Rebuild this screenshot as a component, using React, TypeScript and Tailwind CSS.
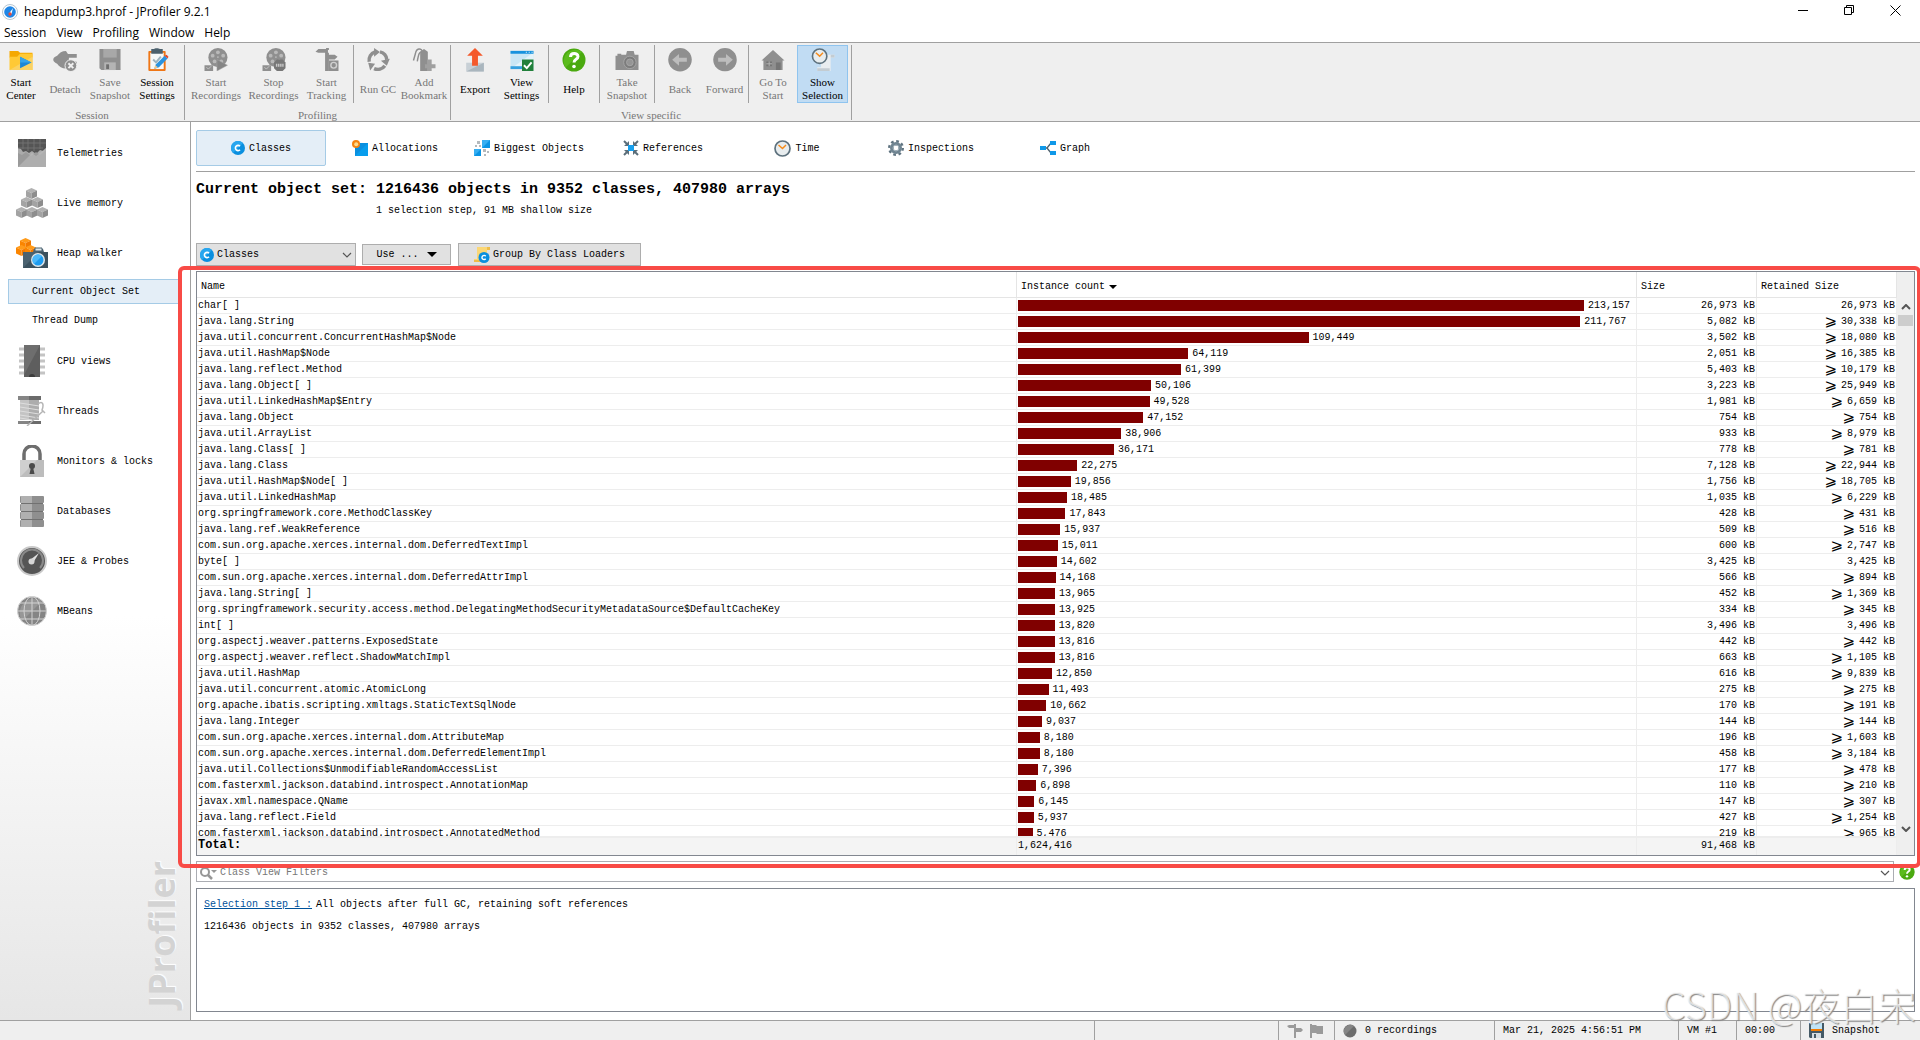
import { ReactNode } from "react"
import clsx from "clsx"

const G = "#8f8f8f"

const FolderIcon = () => (
  <svg width="24" height="24" viewBox="0 0 24 24">
    <path d="M0 3h9l2 2h13v5H0z" fill="#f5a800" />
    <path d="M0 9h8l3-3h13v17H0z" fill="#ffc935" />
    <path d="M0 23L24 9v14z" fill="#fbd262" />
    <path d="M11 9l12 6-12 6z" fill="#1c87d6" />
    <path d="M11 9l12 6H11z" fill="#35a4ea" />
  </svg>
)

const DetachIcon = () => (
  <svg width="24" height="24" viewBox="0 0 24 24" fill={G}>
    <path d="M0 12c0-2 2-3 4-4 2-3 5-5 9-5l2 3h9v4h-8v4h8v3h-9l-2 4c-4 0-7-2-9-5-2-1-4-2-4-4z" />
    <circle cx="18" cy="18" r="6" stroke="#efefef" />
    <path d="M15.500 15.500l5 5M20.500 15.500l-5 5" stroke="#efefef" strokeWidth="2" />
  </svg>
)

const SaveIcon = () => (
  <svg width="24" height="24" viewBox="0 0 24 24">
    <path d="M1 1h22v22H3l-2-2z" fill={G} />
    <path d="M5 1h14v9H5z" fill="#a8a8a8" />
    <path d="M6 15h12v8H6z" fill="#b4b4b4" />
    <path d="M8 17h3v5H8z" fill="#6f6f6f" />
  </svg>
)

const SessionSettingsIcon = () => (
  <svg width="24" height="24" viewBox="0 0 24 24">
    <rect x="3" y="3" width="18" height="21" rx="1" fill="#ef7616" />
    <rect x="5" y="5" width="14" height="17" fill="#f6f9fa" />
    <path d="M6 1h3c0-1 5-1 6 0h3v5H6z" fill="#4c616e" />
    <path d="M8 12l3 3 5-6" fill="none" stroke="#9db3bf" strokeWidth="2" />
    <path d="M9 22l2-5 9-9 3 3-9 9z" fill="#2b93df" />
    <path d="M20 8l2-1 2 2-1 2z" fill="#e4472b" />
    <path d="M9 22l1-4 3 2z" fill="#f2c98f" />
  </svg>
)

const Reel = () => (
  <>
    <circle cx="14" cy="10" r="10" fill={G} />
    <g fill="#b9b9b9">
      <circle cx="14" cy="4.500" r="2" />
      <circle cx="8.500" cy="8" r="2" />
      <circle cx="19.500" cy="8" r="2" />
      <circle cx="10.500" cy="14" r="2" />
      <circle cx="17.500" cy="14" r="2" />
      <circle cx="14" cy="9.500" r="1" />
    </g>
    <path d="M0 18h9v6H0z" fill={G} />
    <path d="M2 20l2 2 3-3" stroke="#c4c4c4" fill="none" />
  </>
)

const StartRecIcon = () => (
  <svg width="24" height="24" viewBox="0 0 24 24">
    <Reel />
    <path d="M13 12l11 6-11 6z" fill="#858585" stroke="#a9a9a9" strokeWidth=".5" />
  </svg>
)

const StopRecIcon = () => (
  <svg width="24" height="24" viewBox="0 0 24 24">
    <Reel />
    <path d="M15 12h6l3 3v6l-3 3h-6l-3-3v-6z" fill="#777" />
    <path d="M14 18h8" stroke="#c9c9c9" strokeWidth="3" strokeDasharray="1.500 .7" />
  </svg>
)

const TrackIcon = () => (
  <svg width="24" height="24" viewBox="0 0 24 24" fill={G}>
    <path d="M0 4l3-3h8V0h3v2h-1v3H3zM11 7h9l3 2-3 3h-9zM10 5h4v19h-4z" />
    <path d="M14 13h10v11H14z" />
    <circle cx="19" cy="18" r="3" fill="none" stroke="#d0d0d0" strokeWidth="1.500" />
  </svg>
)

const GcIcon = () => (
  <svg width="24" height="24" viewBox="0 0 24 24" fill={G}>
    <g fill="none" stroke={G} strokeWidth="3.500">
      <path d="M3 14a9 9 0 0 1 6-10" />
      <path d="M14 4a9 9 0 0 1 7 8" />
      <path d="M19 18a9 9 0 0 1-11 3" />
    </g>
    <path d="M8 0l6 4-6 5zM24 11l-3 7-6-5zM2 15l7 1-5 7z" />
  </svg>
)

const BookmarkIcon = () => (
  <svg width="24" height="24" viewBox="0 0 24 24" fill={G}>
    <path d="M8 4l4-3 4 3v20H8z" />
    <path d="M11 5C9-1 4 0 3 6l-2 7M11 5C7 2 6 8 5 14" fill="none" stroke={G} strokeWidth="1.500" />
    <path d="M16 12h4v5h4v4h-4v3h-4v-3h-3v-4h3z" fill="#a0a0a0" />
  </svg>
)

const ExportIcon = () => (
  <svg width="24" height="24" viewBox="0 0 24 24">
    <path d="M3 15h18v9H3z" fill="#c8d0d6" />
    <path d="M3 24l18-9v9z" fill="#aab6be" />
    <path d="M12 0l8 8h-5v10H9V8H4z" fill="#f4592b" />
  </svg>
)

const ViewSettingsIcon = () => (
  <svg width="24" height="24" viewBox="0 0 24 24">
    <path d="M0 3h24v19H0z" fill="#c9e6f5" />
    <path d="M0 22L22 6h2v16z" fill="#e3f3fa" />
    <path d="M0 19h12v3H0z" fill="#35a0df" />
    <path d="M0 3h24v3H0z" fill="#1792de" />
    <path d="M16 4h1v1h-1zM19 4h1v1h-1zM22 4h1v1h-1z" fill="#fff" />
    <path d="M12 12h12v12H12z" fill="#21803b" />
    <path d="M14 18l3 3 5-6" fill="none" stroke="#fff" strokeWidth="2" />
  </svg>
)

const HelpIcon = ({ size = 24 }: { size?: number }) => (
  <svg width={size} height={size} viewBox="0 0 24 24" className="shrink-0">
    <circle cx="12" cy="12" r="11.500" fill="#4aa90f" />
    <path d="M3.500 19.500A11.500 11.500 0 0 1 20 4z" fill="#5bbb1c" />
    <path d="M8.500 9c0-5 7.500-4.500 7.500-.5 0 3-4 2.500-4 6" fill="none" stroke="#fff" strokeWidth="3" />
    <circle cx="12" cy="18.500" r="1.800" fill="#fff" />
  </svg>
)

const CameraIcon = () => (
  <svg width="24" height="24" viewBox="0 0 24 24">
    <path d="M0 8h2V6h4v1h5l1-4h7l1 4h4v16H0z" fill={G} />
    <circle cx="15" cy="15" r="6.500" fill="#7c7c7c" stroke="#a5a5a5" />
    <circle cx="15" cy="15" r="3.500" fill="#959595" stroke="#a5a5a5" />
  </svg>
)

const ArrowIcon = ({ flip = false }: { flip?: boolean }) => (
  <svg width="24" height="24" viewBox="0 0 24 24" className={clsx(flip && "rotate-180")}>
    <circle cx="12" cy="12" r="12" fill={G} />
    <path d="M4 12l7-6v4h8v4h-8v4z" fill="#bdbdbd" />
  </svg>
)

const HomeIcon = () => (
  <svg width="24" height="24" viewBox="0 0 24 24">
    <path d="M12 2L24 13h-2v10H2V13H0z" fill={G} />
    <path d="M5 14h6v5H5zM15 15h5v8h-5z" fill="#757575" />
    <path d="M8 14v5M5 16.500h6" stroke="#b5b5b5" />
  </svg>
)

const ClockFace = () => (
  <>
    <circle cx="8.500" cy="8.500" r="7.500" fill="#e8edef" stroke="#5d717d" strokeWidth="1.700" />
    <path d="M4.500 5l4 3.500L12 5" fill="none" stroke="#f58b1b" strokeWidth="1.500" />
  </>
)

const ShowSelectionIcon = () => (
  <svg width="24" height="24" viewBox="0 0 24 24">
    <path d="M10 7h14v3h-4v14H6v-4h4z" fill="#e9edf0" />
    <path d="M20 7h4v3h-4zM6 21h13v3H6z" fill="#c3ccd2" />
    <ClockFace />
  </svg>
)

const ClassIcon = () => (
  <svg width="14" height="14" viewBox="0 0 14 14" className="shrink-0">
    <circle cx="7" cy="7" r="7" fill="#0a8fdf" />
    <path d="M2 12A7 7 0 0 1 12 2z" fill="#27a6ef" />
    <path d="M9 5.300a2.600 2.600 0 1 0 0 3.400" fill="none" stroke="#fff" strokeWidth="1.600" />
  </svg>
)

const AllocIcon = () => (
  <svg width="16" height="16" viewBox="0 0 16 16">
    <path d="M3 3h13v13H3z" fill="#0a8fdf" />
    <path d="M3 16L16 3v13z" fill="#079ded" />
    <circle cx="4" cy="4" r="4" fill="#f58512" />
    <circle cx="4.200" cy="4.200" r="2" fill="#ffdc8c" />
  </svg>
)

const BiggestIcon = () => (
  <svg width="16" height="16" viewBox="0 0 16 16">
    <path d="M8 0h8v8H8zM0 9h7v7H0z" fill="#0a94e4" />
    <path d="M8 8l8-8H8zM0 16l7-7H0z" fill="#36aef2" />
    <path d="M3 1h3v3H3zM1 5h2v2H1zM5 5h2v2H5zM9 9h3v3H9zM13 11h2v2h-2zM10 14h2v2h-2z" fill="#b4b9bd" />
  </svg>
)

const RefsIcon = () => (
  <svg width="16" height="16" viewBox="0 0 16 16">
    <path d="M1 1l4 4M15 1l-4 4M1 15l4-4M15 15l-4-4" stroke="#5b6e7a" strokeWidth="2" />
    <path d="M6 1v5H1zM10 1v5h5zM6 15v-5H1zM10 15v-5h5z" fill="#5b6e7a" />
    <path d="M5 5h6v6H5z" fill="#18a0ee" />
  </svg>
)

const TimeIcon = () => (
  <svg width="17" height="17" viewBox="0 0 17 17">
    <ClockFace />
  </svg>
)

const GearIcon = () => (
  <svg width="16" height="16" viewBox="0 0 16 16">
    <circle cx="8" cy="8" r="6.800" fill="none" stroke="#5f7380" strokeWidth="2.400" strokeDasharray="2.700 2.640" />
    <circle cx="8" cy="8" r="4.200" fill="none" stroke="#6f8491" strokeWidth="3.600" />
    <circle cx="8" cy="8" r="3" fill="none" stroke="#a5b4bd" />
  </svg>
)

const GraphIcon = () => (
  <svg width="16" height="16" viewBox="0 0 16 16">
    <path d="M5 8h2l4-5M7 8l4 5" fill="none" stroke="#4f626e" strokeWidth="1.300" />
    <path d="M0 6h6v4H0zM10 1h6v4h-6zM10 11h6v4h-6z" fill="#0f98e8" />
  </svg>
)

const LoaderIcon = () => (
  <svg width="16" height="16" viewBox="0 0 16 16">
    <path d="M3 0h13v3h-3v12H0v-3h3z" fill="#fbd776" />
    <path d="M13 0h3v3h-3zM0 13h10v2H0z" fill="#eebd4a" />
    <circle cx="10" cy="10.500" r="5.500" fill="#0a8fdf" />
    <path d="M11.700 9.200a2.100 2.100 0 1 0 0 2.600" fill="none" stroke="#fff" strokeWidth="1.400" />
  </svg>
)

const TelemetryIcon = () => (
  <svg width="28" height="28" viewBox="0 0 28 28">
    <rect width="28" height="28" rx="1" fill="#ababab" />
    <path d="M0 0h28v9l-3 3-3-1-4 4-4-3-3 2-3-2-3 1-2-3-3-1z" fill="#555" />
    <path d="M0 4h28M0 9h25M5 0v10M10 0v12M16 0v12M22 0v10" stroke="#777" strokeWidth=".8" />
    <path d="M0 14l4 2 4-3 5 4 5-4 4 3 6-5v17H0z" fill="#9a9a9a" />
    <path d="M0 28L14 14l4 3 10-8v19z" fill="#bcbcbc" opacity=".6" />
  </svg>
)

type CubeProps = { x: number; y: number; a?: string; b?: string; c?: string }

const Cube = ({ x, y, a = "#b2b2b2", b = "#a3a3a3", c = "#8d8d8d" }: CubeProps) => (
  <g transform={`translate(${x} ${y})`}>
    <path d="M0 2.500L5.500 0 11 2.500 5.500 5z" fill={a} />
    <path d="M0 2.500L5.500 5v6L0 8.500z" fill={b} />
    <path d="M11 2.500L5.500 5v6L11 8.500z" fill={c} />
  </g>
)

const CubesIcon = () => (
  <svg width="32" height="30" viewBox="0 0 32 30">
    <Cube x={10} y={0} />
    <Cube x={5} y={9} />
    <Cube x={16} y={9} />
    <Cube x={0} y={19} />
    <Cube x={10.500} y={19} />
    <Cube x={21} y={19} />
  </svg>
)

const HeapIcon = () => (
  <svg width="32" height="30" viewBox="0 0 32 30">
    <Cube x={4} y={0} a="#ff9b1a" b="#fb8500" c="#f07800" />
    <Cube x={0} y={7} a="#ff9b1a" b="#fb8500" c="#f07800" />
    <Cube x={9} y={7} a="#ff9b1a" b="#fb8500" c="#f07800" />
    <path d="M7 14h10l1-3h9l1 3h4v16H7z" fill="#4b6270" />
    <path d="M7 30l16-16h9v16z" fill="#3b515e" />
    <path d="M19 10h7v3h-7z" fill="#dfe6ea" stroke="#4b6270" />
    <circle cx="22" cy="22" r="7" fill="#e1e8eb" />
    <circle cx="22" cy="22" r="5.500" fill="#1d9cf0" />
    <path d="M18 26a5.500 5.500 0 0 1 8-8z" fill="#4bb8fa" />
  </svg>
)

const CpuIcon = () => (
  <svg width="26" height="32" viewBox="0 0 26 32">
    <path d="M0 4h26M0 10h26M0 16h26M0 22h26M0 28h26" stroke="#c4c4c4" strokeWidth="3" />
    <path d="M5 0h16v32H5z" fill="#5e5e5e" />
    <path d="M5 0h16L5 30z" fill="#6e6e6e" />
    <path d="M10 32a3 3 0 0 1 6 0z" fill="#3d3d3d" />
  </svg>
)

const SpoolIcon = () => (
  <svg width="28" height="30" viewBox="0 0 28 30">
    <path d="M2 4h19v20H2z" fill="#c4c4c4" />
    <path d="M11 4h10v20H11z" fill="#adadad" />
    <path d="M2 7l19 3M2 11l19 3M2 15l19 3M2 19l19 3M2 22l12 2" stroke="#dedede" strokeWidth="1" />
    <path d="M0 0h23v4H0zM0 25h23v3H0z" fill="#6b6b6b" />
    <path d="M0 0h11v4H0zM0 25h11v3H0z" fill="#858585" />
    <path d="M20 8c5-4 6 1 4 6l3 3M9 30l16-15" fill="none" stroke="#b5b5b5" strokeWidth="1.500" />
  </svg>
)

const LockIcon = () => (
  <svg width="24" height="32" viewBox="0 0 24 32">
    <path d="M4 16V9a8 8 0 0 1 16 0v7" fill="none" stroke="#6e6e6e" strokeWidth="3.500" />
    <path d="M0 15h24v17H0z" fill="#cfcfcf" />
    <path d="M0 32l17-17h7v17z" fill="#bdbdbd" />
    <circle cx="12" cy="21" r="3" fill="#4a4a4a" />
    <path d="M11 22h2l1.500 7h-5z" fill="#4a4a4a" />
  </svg>
)

const DbIcon = () => (
  <svg width="24" height="31" viewBox="0 0 24 31">
    {[0, 8, 16, 24].map((y) => (
      <g key={y}>
        <rect y={y} width="24" height="7" rx="1" fill="#8f8f8f" />
        <path d={`M1 ${y}h11v7H1z`} fill="#b0b0b0" />
        <path d={`M1 ${y + 7}h22v1H1z`} fill="#717171" />
      </g>
    ))}
  </svg>
)

const GaugeIcon = () => (
  <svg width="30" height="30" viewBox="0 0 30 30">
    <circle cx="15" cy="15" r="14" fill="#555" stroke="#c9c9c9" strokeWidth="2" />
    <path d="M7 22a11 11 0 1 1 16 0" fill="none" stroke="#8a8a8a" strokeWidth="2" />
    <path d="M13 14l9-7-6 10z" fill="#e0e0e0" />
    <circle cx="14.500" cy="15.500" r="3" fill="#d6d6d6" />
  </svg>
)

const GlobeIcon = () => (
  <svg width="30" height="30" viewBox="0 0 30 30">
    <circle cx="15" cy="15" r="14.500" fill="#858585" />
    <path d="M5 25A14.500 14.500 0 0 1 25 5z" fill="#979797" />
    <g fill="none" stroke="#d2d2d2">
      <circle cx="15" cy="15" r="14.500" />
      <ellipse cx="15" cy="15" rx="8" ry="14.500" />
      <path d="M15 0v30M0 15h30M3 7h24M3 23h24" />
    </g>
  </svg>
)

const Chevron = ({ up = false, bold = false }: { up?: boolean; bold?: boolean }) => (
  <svg width="10" height="6" viewBox="0 0 10 6" className={clsx(up && "rotate-180")}>
    <path d="M1 1l4 4 4-4" fill="none" stroke="#555" strokeWidth={bold ? 2 : 1.200} />
  </svg>
)

const Caret = ({ width = 8, height = 4 }: { width?: number; height?: number }) => (
  <svg width={width} height={height} viewBox="0 0 8 4" preserveAspectRatio="none">
    <path d="M0 0h8L4 4z" fill="#000" />
  </svg>
)

type ToolProps = { icon: ReactNode; lines: string[]; width: string; enabled?: boolean; selected?: boolean }

function Tool({ icon, lines, width, enabled, selected }: ToolProps) {
  return (
    <button
      disabled={!enabled}
      className={clsx(
        "flex h-[58px] flex-col items-center border pt-[2px] whitespace-nowrap",
        width,
        enabled ? "text-black" : "text-[#777]",
        selected ? "border-[#8fc4ef] bg-[#c1dcf3]" : "border-transparent"
      )}
    >
      {icon}
      <span className="mt-[5px] flex h-[26px] flex-col justify-center leading-[13px]">
        {lines.map((l) => (
          <span key={l}>{l}</span>
        ))}
      </span>
    </button>
  )
}

const Sep = () => <div className="h-[58px] w-px bg-[#a0a0a0]" />

function ToolGroup({ caption, children }: { caption: string; children: ReactNode }) {
  return (
    <section className="flex flex-col border-r border-[#a0a0a0] text-[#777]">
      <div className="flex">{children}</div>
      <div className="flex flex-1 items-center justify-center pt-1">{caption}</div>
    </section>
  )
}

function Toolbar() {
  return (
    <div className="flex h-[80px] border-y border-[#a0a0a0] bg-[#efefef] pt-[2px] pb-px font-['Liberation_Serif',serif] text-[11px]">
      <ToolGroup caption="Session">
        <Tool icon={<FolderIcon />} lines={["Start", "Center"]} width="w-[42px]" enabled />
        <Tool icon={<DetachIcon />} lines={["Detach"]} width="w-[46px]" />
        <Tool icon={<SaveIcon />} lines={["Save", "Snapshot"]} width="w-[44px]" />
        <Tool icon={<SessionSettingsIcon />} lines={["Session", "Settings"]} width="w-[50px]" enabled />
        <div className="w-[2px]" />
      </ToolGroup>
      <ToolGroup caption="Profiling">
        <Tool icon={<StartRecIcon />} lines={["Start", "Recordings"]} width="w-[62px]" />
        <Tool icon={<StopRecIcon />} lines={["Stop", "Recordings"]} width="w-[53px]" />
        <Tool icon={<TrackIcon />} lines={["Start", "Tracking"]} width="w-[53px]" />
        <Sep />
        <Tool icon={<GcIcon />} lines={["Run GC"]} width="w-[48px]" />
        <Tool icon={<BookmarkIcon />} lines={["Add", "Bookmark"]} width="w-[44px]" />
        <div className="w-1" />
      </ToolGroup>
      <ToolGroup caption="View specific">
        <Tool icon={<ExportIcon />} lines={["Export"]} width="w-[48px]" enabled />
        <Tool icon={<ViewSettingsIcon />} lines={["View", "Settings"]} width="w-[45px]" enabled />
        <div className="w-1" />
        <Sep />
        <Tool icon={<HelpIcon />} lines={["Help"]} width="w-[50px]" enabled />
        <Sep />
        <Tool icon={<CameraIcon />} lines={["Take", "Snapshot"]} width="w-[54px]" />
        <Sep />
        <Tool icon={<ArrowIcon />} lines={["Back"]} width="w-[50px]" />
        <Tool icon={<ArrowIcon flip />} lines={["Forward"]} width="w-[39px]" />
        <div className="w-1" />
        <Sep />
        <Tool icon={<HomeIcon />} lines={["Go To", "Start"]} width="w-[48px]" />
        <Tool icon={<ShowSelectionIcon />} lines={["Show", "Selection"]} width="w-[51px]" enabled selected />
        <div className="w-[3px]" />
      </ToolGroup>
    </div>
  )
}

function TitleBar() {
  return (
    <header className="font-['Open_Sans',sans-serif] text-xs text-black">
      <div className="flex h-6 items-start justify-between">
        <div className="flex items-center gap-[6px] pt-[3px] pl-[2px]">
          <svg width="16" height="16" viewBox="0 0 16 16">
            <circle cx="8" cy="8" r="7.500" fill="#fff" stroke="#b7c6d1" />
            <circle cx="8" cy="8" r="5.800" fill="#1e86e6" />
            <path d="M7.500 9L11 4l-1.500 6z" fill="#fff" />
            <circle cx="8" cy="10" r="1.700" fill="#e94b3c" />
          </svg>
          <span className="leading-[18px]">heapdump3.hprof - JProfiler 9.2.1</span>
        </div>
        <div className="flex pr-[2px]">
          <button aria-label="Minimize" className="flex h-5 w-[46px] items-center justify-center">
            <svg width="10" height="10"><path d="M0 5.500h10" stroke="#000" /></svg>
          </button>
          <button aria-label="Restore" className="flex h-5 w-[46px] items-center justify-center">
            <svg width="10" height="10"><path d="M.5 2.500h7v7h-7zM2.500 2.500v-2h7v7h-2" fill="none" stroke="#000" /></svg>
          </button>
          <button aria-label="Close" className="flex h-5 w-[46px] items-center justify-center">
            <svg width="11" height="11"><path d="M.5.5l10 10M10.500.5l-10 10" stroke="#000" /></svg>
          </button>
        </div>
      </div>
      <nav className="flex h-[18px] items-center gap-[10px] pl-1">
        {["Session", "View", "Profiling", "Window", "Help"].map((m) => (
          <button key={m} className="leading-[18px]">{m}</button>
        ))}
      </nav>
    </header>
  )
}

function SideItem({ icon, label }: { icon: ReactNode; label: string }) {
  return (
    <a href="#" className="flex h-[50px] items-center pl-4">
      <span className="flex w-8 justify-center">{icon}</span>
      <span className="ml-[9px]">{label}</span>
    </a>
  )
}

function Sidebar() {
  return (
    <aside className="relative w-[191px] shrink-0 overflow-hidden border-r border-[#a0a0a0] bg-linear-to-b from-white from-55% to-[#e6e6e6] pt-[6px]">
      <SideItem icon={<TelemetryIcon />} label="Telemetries" />
      <SideItem icon={<CubesIcon />} label="Live memory" />
      <SideItem icon={<HeapIcon />} label="Heap walker" />
      <a href="#" className="mt-px mr-[9px] ml-2 flex h-[25px] items-center border border-[#a5cbe6] bg-[#e4eef7] pl-[23px]">
        Current Object Set
      </a>
      <a href="#" className="flex h-8 items-center pl-8">Thread Dump</a>
      <SideItem icon={<CpuIcon />} label="CPU views" />
      <SideItem icon={<SpoolIcon />} label="Threads" />
      <SideItem icon={<LockIcon />} label="Monitors & locks" />
      <SideItem icon={<DbIcon />} label="Databases" />
      <SideItem icon={<GaugeIcon />} label="JEE & Probes" />
      <SideItem icon={<GlobeIcon />} label="MBeans" />
      <div className="absolute right-2 bottom-3 rotate-180 font-['Open_Sans',sans-serif] text-[36px] leading-10 font-bold text-[#d3d3d3] [text-shadow:1px_1px_1px_#fff] [writing-mode:vertical-rl]">
        JProfiler
      </div>
    </aside>
  )
}

const tabs = [
  { label: "Classes", icon: <ClassIcon /> },
  { label: "Allocations", icon: <AllocIcon /> },
  { label: "Biggest Objects", icon: <BiggestIcon /> },
  { label: "References", icon: <RefsIcon /> },
  { label: "Time", icon: <TimeIcon /> },
  { label: "Inspections", icon: <GearIcon /> },
  { label: "Graph", icon: <GraphIcon /> },
]

type Row = [name: string, count: number, size: string, retained: string]

// a leading ">" marks a retained size that is only a lower bound
const rows: Row[] = [
  ["char[ ]", 213157, "26,973", "26,973"],
  ["java.lang.String", 211767, "5,082", ">30,338"],
  ["java.util.concurrent.ConcurrentHashMap$Node", 109449, "3,502", ">18,080"],
  ["java.util.HashMap$Node", 64119, "2,051", ">16,385"],
  ["java.lang.reflect.Method", 61399, "5,403", ">10,179"],
  ["java.lang.Object[ ]", 50106, "3,223", ">25,949"],
  ["java.util.LinkedHashMap$Entry", 49528, "1,981", ">6,659"],
  ["java.lang.Object", 47152, "754", ">754"],
  ["java.util.ArrayList", 38906, "933", ">8,979"],
  ["java.lang.Class[ ]", 36171, "778", ">781"],
  ["java.lang.Class", 22275, "7,128", ">22,944"],
  ["java.util.HashMap$Node[ ]", 19856, "1,756", ">18,705"],
  ["java.util.LinkedHashMap", 18485, "1,035", ">6,229"],
  ["org.springframework.core.MethodClassKey", 17843, "428", ">431"],
  ["java.lang.ref.WeakReference", 15937, "509", ">516"],
  ["com.sun.org.apache.xerces.internal.dom.DeferredTextImpl", 15011, "600", ">2,747"],
  ["byte[ ]", 14602, "3,425", "3,425"],
  ["com.sun.org.apache.xerces.internal.dom.DeferredAttrImpl", 14168, "566", ">894"],
  ["java.lang.String[ ]", 13965, "452", ">1,369"],
  ["org.springframework.security.access.method.DelegatingMethodSecurityMetadataSource$DefaultCacheKey", 13925, "334", ">345"],
  ["int[ ]", 13820, "3,496", "3,496"],
  ["org.aspectj.weaver.patterns.ExposedState", 13816, "442", ">442"],
  ["org.aspectj.weaver.reflect.ShadowMatchImpl", 13816, "663", ">1,105"],
  ["java.util.HashMap", 12850, "616", ">9,839"],
  ["java.util.concurrent.atomic.AtomicLong", 11493, "275", ">275"],
  ["org.apache.ibatis.scripting.xmltags.StaticTextSqlNode", 10662, "170", ">191"],
  ["java.lang.Integer", 9037, "144", ">144"],
  ["com.sun.org.apache.xerces.internal.dom.AttributeMap", 8180, "196", ">1,603"],
  ["com.sun.org.apache.xerces.internal.dom.DeferredElementImpl", 8180, "458", ">3,184"],
  ["java.util.Collections$UnmodifiableRandomAccessList", 7396, "177", ">478"],
  ["com.fasterxml.jackson.databind.introspect.AnnotationMap", 6898, "110", ">210"],
  ["javax.xml.namespace.QName", 6145, "147", ">307"],
  ["java.lang.reflect.Field", 5937, "427", ">1,254"],
  ["com.fasterxml.jackson.databind.introspect.AnnotatedMethod", 5476, "219", ">965"],
]

const maxCount = rows[0][1]

function ClassTable() {
  const th = "h-[26px] border-r border-b border-[#e5e5e5] bg-white pt-1 pl-1 text-left font-normal"
  const td = "h-4 border-r border-b border-[#ededed] p-0"
  const total = "border-t-2 border-r border-[#ededed]"

  return (
    <div className="relative mt-[5px] flex min-h-0 flex-1 border border-[#828790]">
      <div className="min-h-0 flex-1 overflow-hidden">
        <table className="w-full table-fixed border-separate border-spacing-0 leading-[15px] whitespace-nowrap">
          <colgroup>
            <col />
            <col className="w-[620px]" />
            <col className="w-[120px]" />
            <col className="w-[140px]" />
          </colgroup>
          <thead className="sticky top-0 z-10">
            <tr>
              <th className={th}>Name</th>
              <th className={th}>
                <span className="flex items-center gap-1">
                  Instance count <Caret />
                </span>
              </th>
              <th className={th}>Size</th>
              <th className={th}>Retained Size</th>
            </tr>
          </thead>
          <tbody>
            {rows.map(([name, count, size, retained]) => (
              <tr key={name}>
                <td className={td}>
                  <div className="overflow-hidden pl-px">{name}</div>
                </td>
                <td className={td}>
                  <div className="flex h-[15px] items-center pr-[52px] pl-px">
                    <div className="h-[11px] shrink-0 bg-[#800000]" style={{ width: `${(count / maxCount) * 100}%` }} />
                    <span className="ml-1">{count.toLocaleString("en-US")}</span>
                  </div>
                </td>
                <td className={clsx(td, "text-right")}>
                  <div className="pr-px">{size} kB</div>
                </td>
                <td className={td}>
                  <div className="flex h-[15px] items-center justify-end gap-1 pr-px">
                    {retained.startsWith(">") && (
                      <span className="font-['DejaVu_Sans',sans-serif] text-[15px] leading-[15px]">⩾</span>
                    )}
                    <span>{retained.replace(">", "")} kB</span>
                  </div>
                </td>
              </tr>
            ))}
          </tbody>
          <tfoot className="sticky bottom-0 z-10">
            <tr className="h-[19px] bg-[#f4f4f4] align-top">
              <td className={clsx(total, "pl-px text-xs leading-[15px] font-bold")}>Total:</td>
              <td className={clsx(total, "pl-px")}>1,624,416</td>
              <td className={clsx(total, "pr-px text-right")}>91,468 kB</td>
              <td className={total}></td>
            </tr>
          </tfoot>
        </table>
      </div>
      <div className="flex w-[17px] flex-col items-center bg-[#efefef] pt-[32px] pb-[23px]">
        <Chevron up bold />
        <div className="mt-[5px] h-[11px] w-[15px] bg-[#cdcdcd]" />
        <div className="flex-1" />
        <Chevron bold />
      </div>
      <div className="pointer-events-none absolute -top-[6px] -right-[7px] -bottom-[13px] -left-[19px] z-20 rounded-md border-4 border-[#f84b46]" />
    </div>
  )
}

function Main() {
  const button = "flex items-center justify-center border border-[#adadad] bg-[#e1e1e1]"

  return (
    <main className="flex min-w-0 flex-1 flex-col bg-white pt-2 pr-[5px] pb-2 pl-[5px]">
      <div role="tablist" className="flex gap-1 border-b border-[#a0a0a0] pb-[5px]">
        {tabs.map(({ label, icon }, i) => (
          <button
            key={label}
            role="tab"
            aria-selected={i === 0}
            className={clsx(
              "flex h-9 w-[130px] items-center justify-center gap-1 rounded-xs border",
              i === 0 ? "border-[#a5cbe6] bg-[#e4eef7]" : "border-transparent"
            )}
          >
            {icon}
            <span>{label}</span>
          </button>
        ))}
      </div>

      <div className="flex gap-[9px] pt-2">
        <h1 className="text-[15px] leading-5 font-bold">Current object set:</h1>
        <div>
          <p className="text-[15px] leading-5 font-bold">1216436 objects in 9352 classes, 407980 arrays</p>
          <p className="pt-[3px] leading-4">1 selection step, 91 MB shallow size</p>
        </div>
      </div>

      <div className="mt-6 flex items-center">
        <label className="relative flex h-[23px] w-[160px] items-center">
          <select aria-label="Classes" className="h-full w-full appearance-none border border-[#adadad] bg-[#e1e1e1] pl-5">
            <option>Classes</option>
          </select>
          <span className="pointer-events-none absolute left-1"><ClassIcon /></span>
          <span className="pointer-events-none absolute right-1"><Chevron /></span>
        </label>
        <button className={clsx(button, "ml-[6px] h-[21px] w-[89px] gap-2")}>
          Use ... <Caret width={10} height={5} />
        </button>
        <button className={clsx(button, "ml-[7px] h-[23px] w-[183px] gap-[3px]")}>
          <LoaderIcon /> Group By Class Loaders
        </button>
      </div>

      <ClassTable />

      <div className="mt-[5px] flex items-center gap-[5px]">
        <div className="flex h-[21px] flex-1 items-center border border-[#abadb3] px-[3px] pt-[2px]">
          <svg width="17" height="14" viewBox="0 0 17 14">
            <circle cx="5" cy="6" r="4" fill="none" stroke="#979797" strokeWidth="2" />
            <path d="M8 9l4 4" stroke="#979797" strokeWidth="2.500" />
            <path d="M11 4h6l-3 3z" fill="#979797" />
          </svg>
          <input
            aria-label="Class View Filters"
            placeholder="Class View Filters"
            className="ml-[3px] h-4 flex-1 outline-none placeholder:text-[#777]"
          />
          <Chevron />
        </div>
        <button aria-label="Help"><HelpIcon size={16} /></button>
      </div>

      <div className="mt-[6px] h-[124px] border border-[#828790] px-[7px] pt-2">
        <p className="leading-4">
          <a href="#" className="text-[#00529b] underline">Selection step 1 :</a>
          <span className="ml-1">All objects after full GC, retaining soft references</span>
        </p>
        <p className="mt-[6px] leading-4">1216436 objects in 9352 classes, 407980 arrays</p>
      </div>
    </main>
  )
}

function StatusBar() {
  const cell = "flex items-center border-l border-[#a0a0a0] pl-2"

  return (
    <footer className="flex h-5 border-t border-[#a0a0a0] bg-[#efefef]">
      <div className="flex-1" />
      <div className={clsx(cell, "w-[184px]")} />
      <div className={clsx(cell, "w-[56px] gap-[7px]")}>
        <svg width="16" height="14" viewBox="0 0 16 14" fill="#9a9a9a">
          <path d="M0 2l2-1h7v3H2zM7 4h7l2 2-2 2H7zM7 0h2v14H7z" />
        </svg>
        <svg width="13" height="14" viewBox="0 0 13 14" fill="#9a9a9a">
          <path d="M0 0h2v14H0zM2 1h4l1 1h6v8H7L6 9H2z" />
        </svg>
      </div>
      <div className={clsx(cell, "w-[160px] gap-2")}>
        <svg width="14" height="14" viewBox="0 0 14 14">
          <circle cx="7" cy="7" r="6.500" fill="#6c6c6c" />
          <path d="M2 11A6.500 6.500 0 0 1 11 2z" fill="#858585" />
        </svg>
        0 recordings
      </div>
      <div className={clsx(cell, "w-[184px]")}>Mar 21, 2025 4:56:51 PM</div>
      <div className={clsx(cell, "w-[58px]")}>VM #1</div>
      <div className={clsx(cell, "w-[64px]")}>00:00</div>
      <div className={clsx(cell, "w-[120px] gap-2")}>
        <svg width="15" height="15" viewBox="0 0 15 15">
          <path d="M0 0h15v15H1l-1-1z" fill="#455a66" />
          <path d="M2 0h11v6H2z" fill="#bfe3f6" />
          <path d="M2 6h11v2H2z" fill="#f57c00" />
          <path d="M3 10h9v5H3z" fill="#d5dde1" />
          <path d="M5 11h2v4H5z" fill="#455a66" />
        </svg>
        Snapshot
      </div>
    </footer>
  )
}

export default function App() {
  return (
    <div className="relative flex h-screen flex-col overflow-hidden bg-white font-['Liberation_Mono',monospace] text-[10px] text-black">
      <TitleBar />
      <Toolbar />
      <div className="flex min-h-0 flex-1">
        <Sidebar />
        <Main />
      </div>
      <StatusBar />
      <div className="pointer-events-none absolute right-1 bottom-4 font-['Noto_Sans_CJK_SC',sans-serif] text-[38px] leading-10 font-light text-white/70 [text-shadow:1px_1px_1px_#888]">
        CSDN @夜白宋
      </div>
    </div>
  )
}
